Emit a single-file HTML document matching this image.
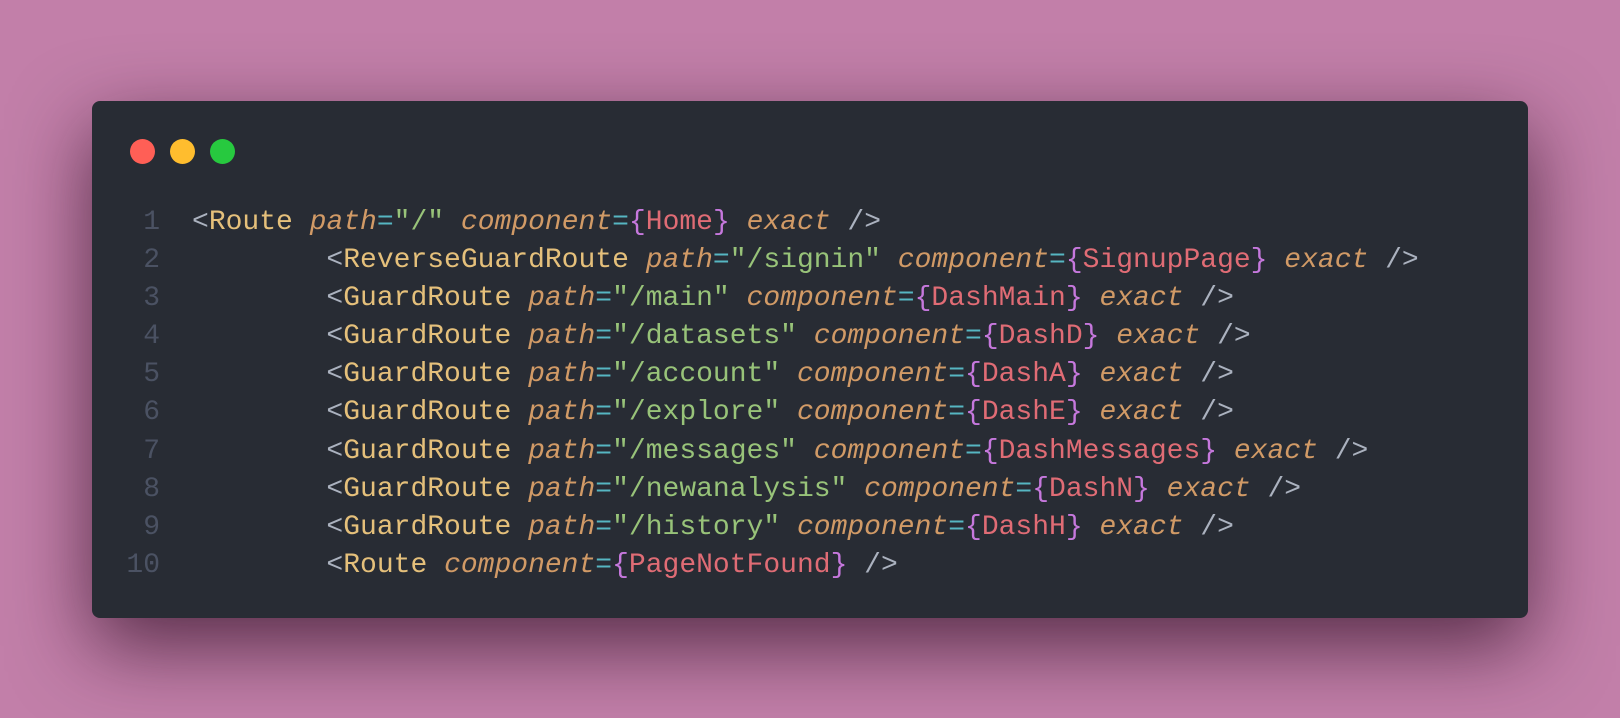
<!DOCTYPE html>
<html><head><meta charset="utf-8"><style>
html,body{margin:0;padding:0;width:1620px;height:718px;overflow:hidden;background:#c27fa9;}
.win{position:absolute;left:92px;top:101px;width:1436px;height:517px;background:#282c34;border-radius:8px;box-shadow:0 28px 80px rgba(40,10,30,0.7);}
.dot{position:absolute;top:139px;width:25px;height:25px;border-radius:50%;}
pre{position:absolute;left:0;top:204px;margin:0;font-family:"Liberation Mono",monospace;font-size:28px;line-height:38.1px;color:#abb2bf;}
.n{display:inline-block;width:160px;text-align:right;color:#4b5263;margin-right:32px;}
.t{color:#e5c07b}.a{color:#d19a66;font-style:italic}.e{color:#56b6c2}.s{color:#98c379}.b{color:#c678dd}.c{color:#e06c75}
</style></head><body>
<div class="win"></div>
<div class="dot" style="left:130px;background:#ff5f56"></div>
<div class="dot" style="left:170px;background:#ffbd2e"></div>
<div class="dot" style="left:210px;background:#27c93f"></div>
<pre><span class="n">1</span>&lt;<span class="t">Route</span> <span class="a">path</span><span class="e">=</span><span class="s">"/"</span> <span class="a">component</span><span class="e">=</span><span class="b">{</span><span class="c">Home</span><span class="b">}</span> <span class="a">exact</span> /&gt;
<span class="n">2</span>        &lt;<span class="t">ReverseGuardRoute</span> <span class="a">path</span><span class="e">=</span><span class="s">"/signin"</span> <span class="a">component</span><span class="e">=</span><span class="b">{</span><span class="c">SignupPage</span><span class="b">}</span> <span class="a">exact</span> /&gt;
<span class="n">3</span>        &lt;<span class="t">GuardRoute</span> <span class="a">path</span><span class="e">=</span><span class="s">"/main"</span> <span class="a">component</span><span class="e">=</span><span class="b">{</span><span class="c">DashMain</span><span class="b">}</span> <span class="a">exact</span> /&gt;
<span class="n">4</span>        &lt;<span class="t">GuardRoute</span> <span class="a">path</span><span class="e">=</span><span class="s">"/datasets"</span> <span class="a">component</span><span class="e">=</span><span class="b">{</span><span class="c">DashD</span><span class="b">}</span> <span class="a">exact</span> /&gt;
<span class="n">5</span>        &lt;<span class="t">GuardRoute</span> <span class="a">path</span><span class="e">=</span><span class="s">"/account"</span> <span class="a">component</span><span class="e">=</span><span class="b">{</span><span class="c">DashA</span><span class="b">}</span> <span class="a">exact</span> /&gt;
<span class="n">6</span>        &lt;<span class="t">GuardRoute</span> <span class="a">path</span><span class="e">=</span><span class="s">"/explore"</span> <span class="a">component</span><span class="e">=</span><span class="b">{</span><span class="c">DashE</span><span class="b">}</span> <span class="a">exact</span> /&gt;
<span class="n">7</span>        &lt;<span class="t">GuardRoute</span> <span class="a">path</span><span class="e">=</span><span class="s">"/messages"</span> <span class="a">component</span><span class="e">=</span><span class="b">{</span><span class="c">DashMessages</span><span class="b">}</span> <span class="a">exact</span> /&gt;
<span class="n">8</span>        &lt;<span class="t">GuardRoute</span> <span class="a">path</span><span class="e">=</span><span class="s">"/newanalysis"</span> <span class="a">component</span><span class="e">=</span><span class="b">{</span><span class="c">DashN</span><span class="b">}</span> <span class="a">exact</span> /&gt;
<span class="n">9</span>        &lt;<span class="t">GuardRoute</span> <span class="a">path</span><span class="e">=</span><span class="s">"/history"</span> <span class="a">component</span><span class="e">=</span><span class="b">{</span><span class="c">DashH</span><span class="b">}</span> <span class="a">exact</span> /&gt;
<span class="n">10</span>        &lt;<span class="t">Route</span> <span class="a">component</span><span class="e">=</span><span class="b">{</span><span class="c">PageNotFound</span><span class="b">}</span> /&gt;</pre>
</body></html>
